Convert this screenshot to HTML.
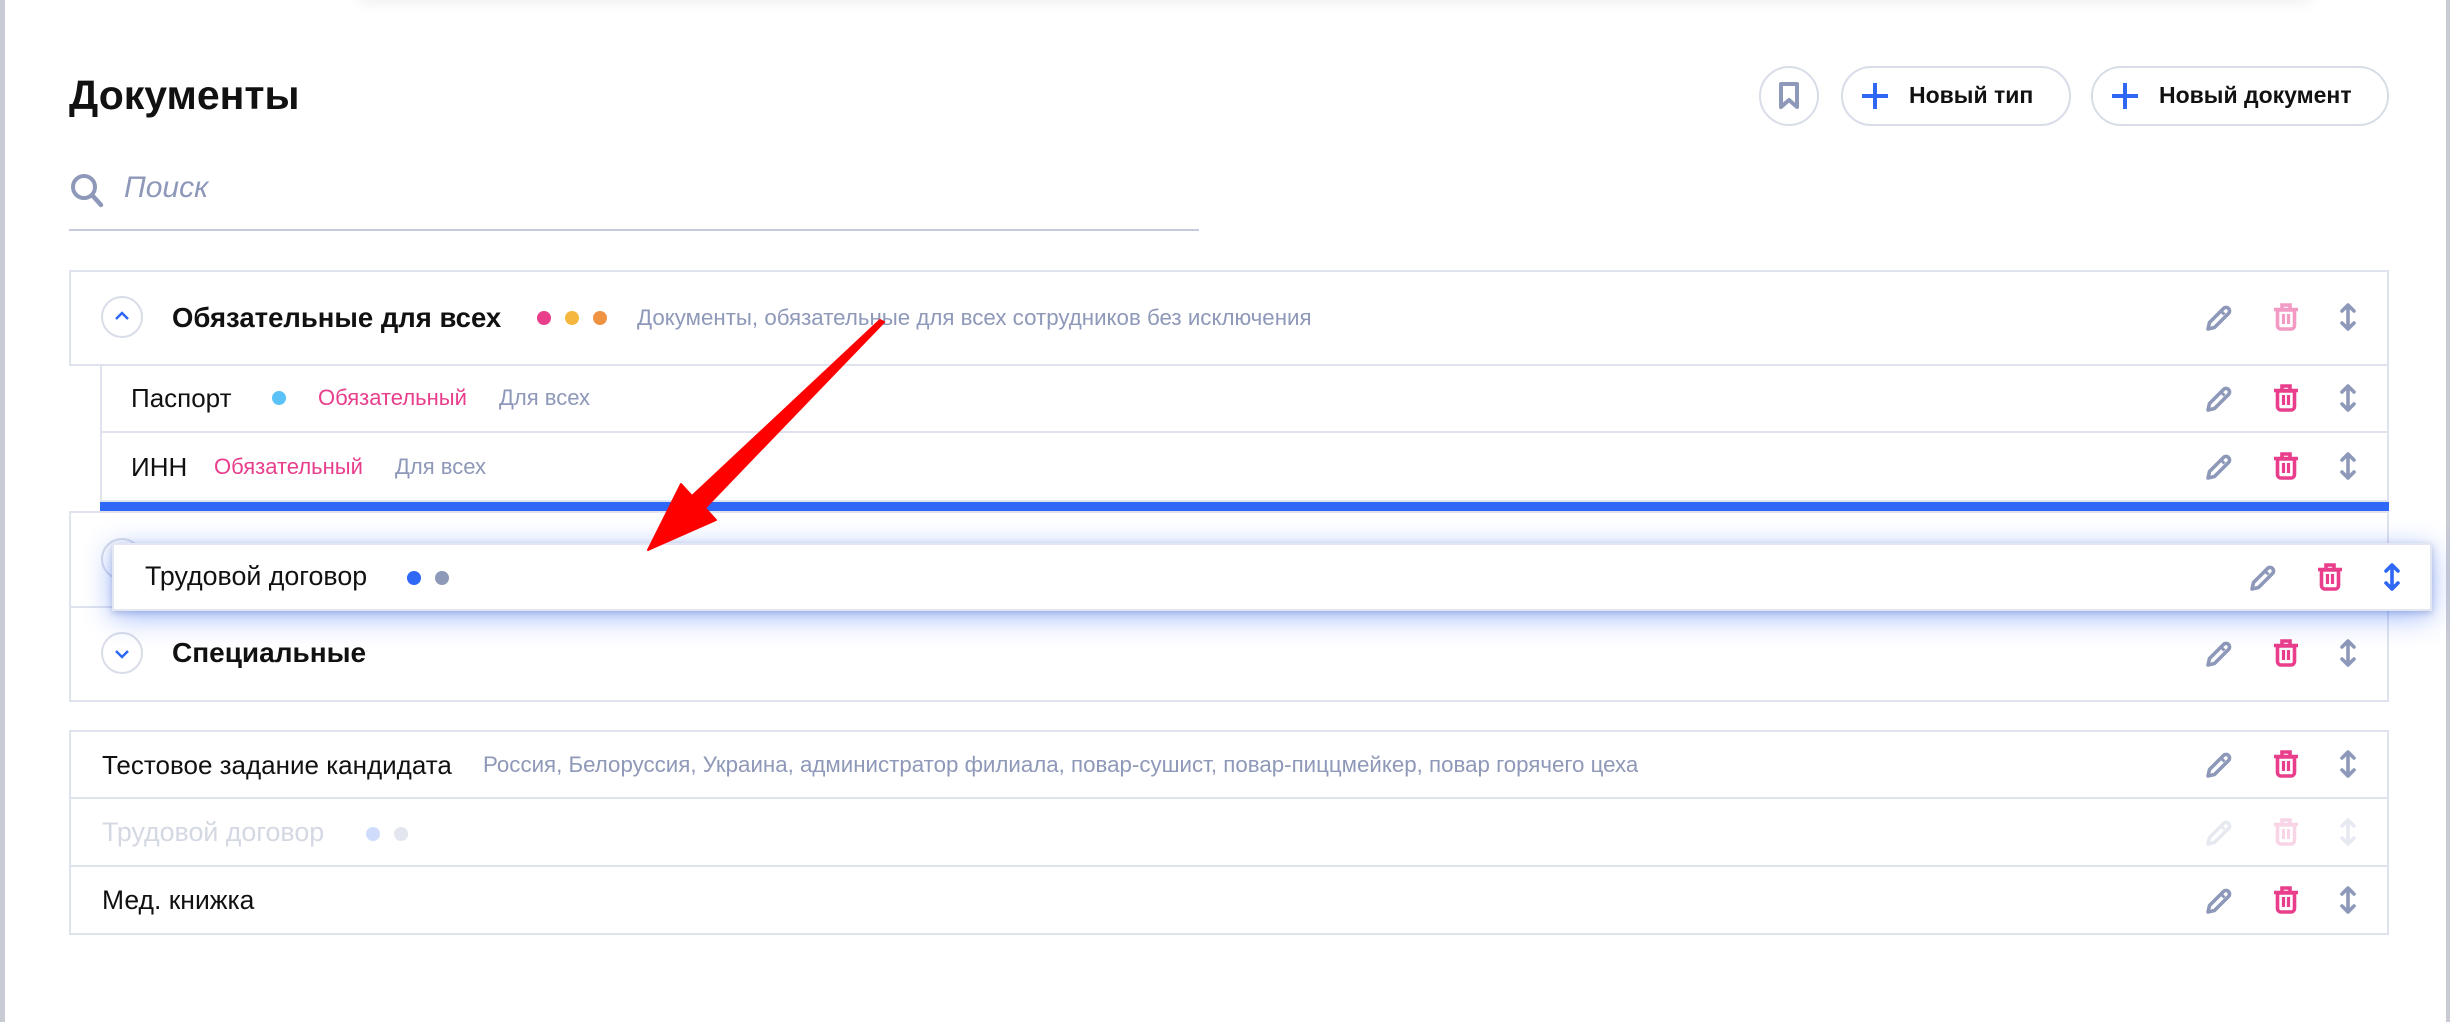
<!DOCTYPE html>
<html><head><meta charset="utf-8"><style>
*{margin:0;padding:0;box-sizing:border-box}
body{width:2450px;height:1022px;background:#fff;position:relative;overflow:hidden;font-family:"Liberation Sans","Noto Sans CJK SC",sans-serif;color:#111}
.a{position:absolute}
.box{position:absolute;border:2px solid #dfe3ee;background:#fff}
.t{position:absolute;white-space:nowrap}
.dot{position:absolute;width:14px;height:14px;border-radius:50%}
.g{color:#8e98b8}
.p{color:#e83e8c}
.ic{width:30px;height:30px;display:block}
.circ{position:absolute;width:42px;height:42px;border:2px solid #d9dde8;border-radius:50%}
</style></head><body>
<div class="a" style="left:0;top:0;width:5px;height:1022px;background:#c8cad4"></div>
<div class="a" style="left:2446px;top:0;width:4px;height:1022px;background:#c8cad4"></div>
<div class="a" style="left:360px;top:-20px;width:1950px;height:20px;box-shadow:0 4px 14px rgba(0,0,0,.06)"></div>

<div class="t" style="left:69px;top:72px;font-size:41px;font-weight:bold">Документы</div>

<svg class="a" style="left:69px;top:172px" width="36" height="36" viewBox="0 0 36 36"><circle cx="15" cy="15" r="11" fill="none" stroke="#8e98b8" stroke-width="4"/><path d="M23 23l9 10" stroke="#8e98b8" stroke-width="4.5" stroke-linecap="round"/></svg>
<div class="t g" style="left:124px;top:171px;font-size:30px;font-style:italic">Поиск</div>
<div class="a" style="left:69px;top:229px;width:1130px;height:2px;background:#c5cbdc"></div>

<div class="a" style="left:1759px;top:66px;width:60px;height:60px;border:2px solid #d9dde8;border-radius:50%"></div>
<svg class="a" style="left:1778px;top:81px" width="22" height="30" viewBox="0 0 22 30"><path d="M3 3h16v23l-8-7-8 7z" fill="none" stroke="#8e98b8" stroke-width="4" stroke-linejoin="round"/></svg>
<div class="a" style="left:1841px;top:66px;width:230px;height:60px;border:2px solid #d9dde8;border-radius:30px"></div>
<svg class="a" style="left:1860px;top:81px" width="30" height="30"><path d="M15 2v26M2 15h26" stroke="#2f67f6" stroke-width="4"/></svg>
<div class="t" style="left:1909px;top:82px;font-size:23px;font-weight:bold">Новый тип</div>
<div class="a" style="left:2091px;top:66px;width:298px;height:60px;border:2px solid #d9dde8;border-radius:30px"></div>
<div class="a" style="left:2110px;top:81px"><svg width="30" height="30"><path d="M15 2v26M2 15h26" stroke="#2f67f6" stroke-width="4"/></svg></div>
<div class="t" style="left:2159px;top:82px;font-size:23px;font-weight:bold">Новый документ</div>

<!-- group 1 -->
<div class="box" style="left:69px;top:270px;width:2320px;height:96px"></div>
<div class="circ" style="left:101px;top:296px"></div>
<svg class="a" style="left:112px;top:308px" width="20" height="16"><path d="M4 11l6-6 6 6" fill="none" stroke="#2f67f6" stroke-width="2.5"/></svg>
<div class="t" style="left:172px;top:302px;font-size:27.5px;font-weight:bold">Обязательные для всех</div>
<div class="dot" style="left:537px;top:311px;background:#e83e8c"></div>
<div class="dot" style="left:565px;top:311px;background:#f5b73f"></div>
<div class="dot" style="left:593px;top:311px;background:#ef9342"></div>
<div class="t g" style="left:637px;top:305px;font-size:22.3px">Документы, обязательные для всех сотрудников без исключения</div>

<div class="a" style="left:100px;top:364px;width:2289px;height:138px;border-left:2px solid #dfe3ee;border-right:2px solid #dfe3ee"></div>
<div class="a" style="left:100px;top:431px;width:2289px;height:2px;background:#dfe3ee"></div>
<div class="a" style="left:100px;top:500px;width:2289px;height:2px;background:#dfe3ee"></div>
<div class="t" style="left:131px;top:383px;font-size:26px">Паспорт</div>
<div class="dot" style="left:272px;top:391px;background:#5bc2f7"></div>
<div class="t p" style="left:318px;top:385px;font-size:22px">Обязательный</div>
<div class="t g" style="left:499px;top:385px;font-size:22px">Для всех</div>
<div class="t" style="left:131px;top:452px;font-size:26px">ИНН</div>
<div class="t p" style="left:214px;top:454px;font-size:22px">Обязательный</div>
<div class="t g" style="left:395px;top:454px;font-size:22px">Для всех</div>
<div class="a" style="left:100px;top:502px;width:2289px;height:10px;background:#2f67f6"></div>

<!-- group 2 -->
<div class="box" style="left:69px;top:511px;width:2320px;height:191px"></div>
<div class="a" style="left:69px;top:606px;width:2320px;height:2px;background:#dfe3ee"></div>
<div class="circ" style="left:101px;top:538px"></div>
<div class="circ" style="left:101px;top:632px"></div>
<svg class="a" style="left:112px;top:646px" width="20" height="16"><path d="M4 5l6 6 6-6" fill="none" stroke="#2f67f6" stroke-width="2.5"/></svg>
<div class="t" style="left:172px;top:637px;font-size:28px;font-weight:bold">Специальные</div>

<!-- list -->
<div class="box" style="left:69px;top:730px;width:2320px;height:205px"></div>
<div class="a" style="left:69px;top:797px;width:2320px;height:2px;background:#dfe3ee"></div>
<div class="a" style="left:69px;top:865px;width:2320px;height:2px;background:#dfe3ee"></div>
<div class="t" style="left:102px;top:750px;font-size:26px">Тестовое задание кандидата</div>
<div class="t g" style="left:483px;top:752px;font-size:22.3px">Россия, Белоруссия, Украина, администратор филиала, повар-сушист, повар-пиццмейкер, повар горячего цеха</div>
<div class="t" style="left:102px;top:817px;font-size:26.8px;color:#d4d8e2">Трудовой договор</div>
<div class="dot" style="left:366px;top:827px;background:#cfdcfb"></div>
<div class="dot" style="left:394px;top:827px;background:#e3e6ee"></div>
<div class="t" style="left:102px;top:885px;font-size:26.5px">Мед. книжка</div>

<!-- icons -->
<svg width="0" height="0" style="position:absolute"><defs>
<symbol id="pen" viewBox="0 0 30 30"><path d="M4 27l1.5-6.5L19.5 6.5a3.5 3.5 0 0 1 5 5L10.5 25.5z" fill="none" stroke="currentColor" stroke-width="3.6" stroke-linejoin="round"/><path d="M17.5 9.5l3 3" stroke="currentColor" stroke-width="3"/></symbol>
<symbol id="bin" viewBox="0 0 30 30"><path d="M3 7.5h24M11 7V3h8v4" fill="none" stroke="currentColor" stroke-width="3.6"/><path d="M6.5 8h17v15.5a3.5 3.5 0 0 1-3.5 3.5H10a3.5 3.5 0 0 1-3.5-3.5z" fill="none" stroke="currentColor" stroke-width="3.6"/><path d="M12.5 12v10M17.5 12v10" stroke="currentColor" stroke-width="3.2"/></symbol>
<symbol id="arr" viewBox="0 0 30 30"><path d="M15 3v24M9 9l6-6 6 6M9 21l6 6 6-6" fill="none" stroke="currentColor" stroke-width="3.6" stroke-linecap="round" stroke-linejoin="round"/></symbol>
</defs></svg>

<div class="a" style="left:2204px;top:302px;color:#8e98b8"><svg class="ic"><use href="#pen"/></svg></div>
<div class="a" style="left:2271px;top:302px;color:#f29ac4"><svg class="ic"><use href="#bin"/></svg></div>
<div class="a" style="left:2333px;top:302px;color:#8e98b8"><svg class="ic"><use href="#arr"/></svg></div>

<div class="a" style="left:2204px;top:383px;color:#8e98b8"><svg class="ic"><use href="#pen"/></svg></div>
<div class="a" style="left:2271px;top:383px;color:#e83e8c"><svg class="ic"><use href="#bin"/></svg></div>
<div class="a" style="left:2333px;top:383px;color:#8e98b8"><svg class="ic"><use href="#arr"/></svg></div>

<div class="a" style="left:2204px;top:451px;color:#8e98b8"><svg class="ic"><use href="#pen"/></svg></div>
<div class="a" style="left:2271px;top:451px;color:#e83e8c"><svg class="ic"><use href="#bin"/></svg></div>
<div class="a" style="left:2333px;top:451px;color:#8e98b8"><svg class="ic"><use href="#arr"/></svg></div>

<div class="a" style="left:2204px;top:638px;color:#8e98b8"><svg class="ic"><use href="#pen"/></svg></div>
<div class="a" style="left:2271px;top:638px;color:#e83e8c"><svg class="ic"><use href="#bin"/></svg></div>
<div class="a" style="left:2333px;top:638px;color:#8e98b8"><svg class="ic"><use href="#arr"/></svg></div>

<div class="a" style="left:2204px;top:749px;color:#8e98b8"><svg class="ic"><use href="#pen"/></svg></div>
<div class="a" style="left:2271px;top:749px;color:#e83e8c"><svg class="ic"><use href="#bin"/></svg></div>
<div class="a" style="left:2333px;top:749px;color:#8e98b8"><svg class="ic"><use href="#arr"/></svg></div>

<div class="a" style="left:2204px;top:817px;color:#e6e9f0"><svg class="ic"><use href="#pen"/></svg></div>
<div class="a" style="left:2271px;top:817px;color:#f8d5e6"><svg class="ic"><use href="#bin"/></svg></div>
<div class="a" style="left:2333px;top:817px;color:#e6e9f0"><svg class="ic"><use href="#arr"/></svg></div>

<div class="a" style="left:2204px;top:885px;color:#8e98b8"><svg class="ic"><use href="#pen"/></svg></div>
<div class="a" style="left:2271px;top:885px;color:#e83e8c"><svg class="ic"><use href="#bin"/></svg></div>
<div class="a" style="left:2333px;top:885px;color:#8e98b8"><svg class="ic"><use href="#arr"/></svg></div>

<!-- dragged card -->
<div class="a" style="left:112px;top:543px;width:2320px;height:68px;background:#fff;border:2px solid #e3e7f2;box-shadow:0 6px 28px rgba(47,103,246,.45),0 2px 6px rgba(40,60,120,.25)"></div>
<div class="t" style="left:145px;top:561px;font-size:26.8px">Трудовой договор</div>
<div class="dot" style="left:407px;top:571px;background:#2f67f6"></div>
<div class="dot" style="left:435px;top:571px;background:#8e98b8"></div>
<div class="a" style="left:2248px;top:562px;color:#8e98b8"><svg class="ic"><use href="#pen"/></svg></div>
<div class="a" style="left:2315px;top:562px;color:#e83e8c"><svg class="ic"><use href="#bin"/></svg></div>
<div class="a" style="left:2377px;top:562px;color:#2f67f6"><svg class="ic"><use href="#arr"/></svg></div>

<!-- red arrow -->
<svg class="a" style="left:0;top:0" width="2450" height="1022"><path d="M884 322L705 508L716 520L648 550L681 484L692 496L880 320z" fill="#f00" stroke="#f00" stroke-width="2" stroke-linejoin="round"/></svg>
</body></html>
